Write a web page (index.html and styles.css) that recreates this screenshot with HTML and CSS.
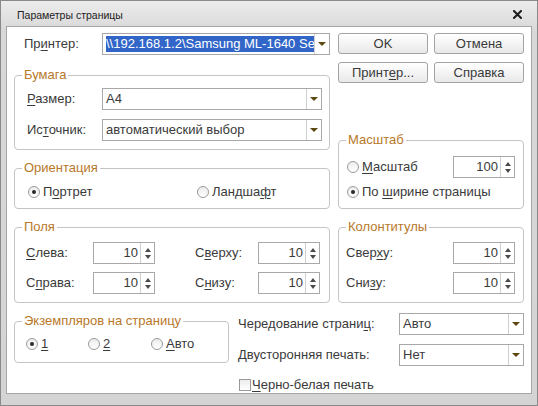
FILE: index.html
```html
<!DOCTYPE html>
<html lang="ru">
<head>
    <meta charset="UTF-8">
    <title>Параметры страницы</title>
    <link rel="stylesheet" href="styles.css">
</head>
<body>
    <div class="window">
        <div class="titlebar">
            <span class="title">Параметры страницы</span>
            <svg class="close" width="9" height="9" viewBox="0 0 9 9">
                <path d="M1 1 L8 8 M8 1 L1 8" stroke="#1c1c1c" stroke-width="2" stroke-linecap="square"/>
            </svg>
        </div>

        <div class="content">
            <div class="top">
                <div class="col-left">
                    <div class="printer-row">
                        <span class="lbl printer-lbl">Пр<u>и</u>нтер:</span>
                        <div class="combo">
                            <span class="value"><span class="sel">\\192.168.1.2\Samsung ML-1640 Series</span></span>
                            <span class="drop"></span>
                        </div>
                    </div>

                    <fieldset class="group paper">
                        <legend>Бумага</legend>
                        <div class="group-body">
                            <span class="lbl"><u>Р</u>азмер:</span>
                            <div class="combo"><span class="value">A4</span><span class="drop"></span></div>
                            <span class="lbl">Ис<u>т</u>очник:</span>
                            <div class="combo"><span class="value">автоматический выбор</span><span class="drop"></span></div>
                        </div>
                    </fieldset>

                    <fieldset class="group orientation">
                        <legend>Ориентация</legend>
                        <div class="group-body">
                            <span class="radio"><span class="rb on"></span><span>П<u>о</u>ртрет</span></span>
                            <span class="radio"><span class="rb"></span><span>Ландша<u>ф</u>т</span></span>
                        </div>
                    </fieldset>
                </div>

                <div class="col-right">
                    <div class="buttons">
                        <div class="btn">OK</div>
                        <div class="btn">Отмена</div>
                        <div class="btn">Принт<u>е</u>р...</div>
                        <div class="btn">Справка</div>
                    </div>

                    <fieldset class="group scale">
                        <legend>Масштаб</legend>
                        <div class="group-body">
                            <div class="scale-row">
                                <span class="radio"><span class="rb"></span><span><u>М</u>асштаб</span></span>
                                <div class="spin"><span class="num">100</span><span class="arrows"><i class="up"></i><i class="down"></i></span></div>
                            </div>
                            <div class="scale-row2">
                                <span class="radio"><span class="rb on"></span><span>По <u>ш</u>ирине страницы</span></span>
                            </div>
                        </div>
                    </fieldset>
                </div>
            </div>

            <div class="middle">
                <fieldset class="group margins">
                    <legend>Поля</legend>
                    <div class="group-body">
                        <span class="lbl"><u>С</u>лева:</span>
                        <div class="spin"><span class="num">10</span><span class="arrows"><i class="up"></i><i class="down"></i></span></div>
                        <span class="lbl indent">С<u>в</u>ерху:</span>
                        <div class="spin"><span class="num">10</span><span class="arrows"><i class="up"></i><i class="down"></i></span></div>
                        <span class="lbl">С<u>п</u>рава:</span>
                        <div class="spin"><span class="num">10</span><span class="arrows"><i class="up"></i><i class="down"></i></span></div>
                        <span class="lbl indent">С<u>н</u>изу:</span>
                        <div class="spin"><span class="num">10</span><span class="arrows"><i class="up"></i><i class="down"></i></span></div>
                    </div>
                </fieldset>

                <fieldset class="group headers">
                    <legend>Колонтитулы</legend>
                    <div class="group-body">
                        <span class="lbl">Свер<u>х</u>у:</span>
                        <div class="spin"><span class="num">10</span><span class="arrows"><i class="up"></i><i class="down"></i></span></div>
                        <span class="lbl">Сни<u>з</u>у:</span>
                        <div class="spin"><span class="num">10</span><span class="arrows"><i class="up"></i><i class="down"></i></span></div>
                    </div>
                </fieldset>
            </div>

            <div class="bottom">
                <fieldset class="group copies">
                    <legend>Экземпляров на страницу</legend>
                    <div class="group-body">
                        <span class="radio"><span class="rb on"></span><u>1</u></span>
                        <span class="radio"><span class="rb"></span><u>2</u></span>
                        <span class="radio"><span class="rb"></span><span><u>А</u>вто</span></span>
                    </div>
                </fieldset>

                <div class="extra">
                    <div class="extra-grid">
                        <span class="lbl">Чередование страни<u>ц</u>:</span>
                        <div class="combo"><span class="value">Авто</span><span class="drop"></span></div>
                        <span class="lbl">Двусторонняя печать:</span>
                        <div class="combo"><span class="value">Нет</span><span class="drop"></span></div>
                    </div>
                    <div class="check-row">
                        <span class="cb"></span><span><u>Ч</u>ерно-белая печать</span>
                    </div>
                </div>
            </div>
        </div>
    </div>
</body>
</html>
```

FILE: styles.css
```css
html, body {
    margin: 0;
}

body {
    width: 538px;
    height: 406px;
    overflow: hidden;
    font: 13px/16px "Liberation Sans", Arial, sans-serif;
    color: #3a3a3a;
    background: #d4d4d4;
}

u {
    text-decoration: underline;
    text-underline-offset: 2px;
}

/* окно */
.window {
    box-sizing: border-box;
    width: 538px;
    height: 406px;
    border: 1px solid #8a8a8a;
    background: linear-gradient(#ececec, #d8d8d8 30px, #d4d4d4);
    padding: 0 5px 11px;
    display: flex;
    flex-direction: column;
}

.titlebar {
    height: 25px;
    box-sizing: border-box;
    padding: 2px 10px 0 11px;
    display: flex;
    align-items: center;
    justify-content: space-between;
}

.title {
    font-size: 10.5px;
    color: #222;
}

.content {
    box-sizing: border-box;
    height: 368px;
    border: 1px solid #a6a6a6;
    background: #fff;
    padding: 6px 7px 0 7px;
}

/* раскладка */
.top,
.middle {
    display: grid;
    grid-template-columns: 316px 186px;
    column-gap: 8px;
}

.middle {
    margin-top: 10px;
}

.bottom {
    display: grid;
    grid-template-columns: 215px 286px;
    column-gap: 9px;
    align-items: start;
    margin-top: 10px;
}

.col-left {
    display: flex;
    flex-direction: column;
}

.col-right {
    display: flex;
    flex-direction: column;
    justify-content: space-between;
}

.printer-row {
    display: grid;
    grid-template-columns: 88px minmax(0, 1fr);
    align-items: center;
    height: 22px;
}

.printer-lbl {
    padding-left: 10px;
}

.buttons {
    display: grid;
    grid-template-columns: 90px 90px;
    gap: 8px 6px;
}

.btn {
    box-sizing: border-box;
    height: 21px;
    border: 1px solid #a3a3a3;
    border-radius: 3px;
    background: linear-gradient(#ffffff, #f4f4f4 50%, #e9e9e9);
    text-align: center;
    line-height: 19px;
}

/* группы */
.group {
    margin: 0;
    padding: 0;
    min-width: 0;
    border: 1px solid #c4c4c4;
    border-radius: 4px;
}

.group legend {
    margin-left: 7px;
    padding: 0 2px;
    line-height: 16px;
    color: #b8782a;
}

.paper {
    margin-top: 12px;
}

.paper .group-body {
    padding: 5px 7px 8px 12px;
    display: grid;
    grid-template-columns: 75px minmax(0, 1fr);
    row-gap: 9px;
    align-items: center;
}

.orientation {
    margin-top: 10px;
}

.orientation .group-body {
    padding: 8px 0 8px 13px;
    display: grid;
    grid-template-columns: 169px 1fr;
}

.scale .group-body {
    padding: 8px 8px 8px 8px;
}

.scale-row {
    height: 22px;
    display: flex;
    align-items: center;
    justify-content: space-between;
}

.scale-row2 {
    margin-top: 4px;
}

.margins .group-body {
    padding: 7px 9px 8px 11px;
    display: grid;
    grid-template-columns: 67px 62px 1fr 62px;
    row-gap: 8px;
    align-items: center;
}

.lbl.indent {
    padding-left: 40px;
}

.headers .group-body {
    padding: 7px 8px 8px 7px;
    display: grid;
    grid-template-columns: 1fr 62px;
    row-gap: 8px;
    align-items: center;
}

.copies .group-body {
    padding: 7px 0 10px 11px;
    display: grid;
    grid-template-columns: 62px 63px 1fr;
}

.extra-grid {
    display: grid;
    grid-template-columns: 161px 125px;
    row-gap: 9px;
    align-items: center;
}

.check-row {
    margin-top: 12px;
    height: 14px;
    display: flex;
    align-items: center;
}

/* элементы */
.combo {
    box-sizing: border-box;
    height: 22px;
    min-width: 0;
    border: 1px solid #a8a8a8;
    background: #fff;
    display: flex;
}

.combo .value {
    flex: 1;
    min-width: 0;
    overflow: hidden;
    white-space: nowrap;
    padding: 2px 0 0 3px;
    line-height: 16px;
}

.sel {
    display: inline-block;
    background: #3165c8;
    color: #fff;
}

.drop {
    flex: none;
    width: 14px;
    border-left: 1px solid #cfcfcf;
    display: flex;
    align-items: center;
    justify-content: center;
}

.drop::after {
    content: "";
    border-left: 4px solid transparent;
    border-right: 4px solid transparent;
    border-top: 4px solid #5e4812;
}

.spin {
    box-sizing: border-box;
    width: 62px;
    height: 22px;
    border: 1px solid #a8a8a8;
    background: #fff;
    display: flex;
}

.spin .num {
    flex: 1;
    text-align: right;
    padding-right: 2px;
    line-height: 20px;
}

.spin .arrows {
    flex: none;
    width: 14px;
    border-left: 1px solid #cfcfcf;
    display: flex;
    flex-direction: column;
    align-items: center;
    justify-content: space-between;
    padding: 5px 0 4px;
    box-sizing: border-box;
}

.spin .up {
    border-left: 3.5px solid transparent;
    border-right: 3.5px solid transparent;
    border-bottom: 4px solid #4a4a4a;
}

.spin .down {
    border-left: 3.5px solid transparent;
    border-right: 3.5px solid transparent;
    border-top: 4px solid #4a4a4a;
}

.radio {
    display: inline-flex;
    align-items: center;
    height: 16px;
}

.rb {
    flex: none;
    box-sizing: border-box;
    width: 12px;
    height: 12px;
    margin-right: 3px;
    border: 1px solid #9a9a9a;
    border-radius: 50%;
    background: linear-gradient(#ececec, #ffffff);
    display: flex;
    align-items: center;
    justify-content: center;
}

.rb.on::after {
    content: "";
    width: 4px;
    height: 4px;
    border-radius: 50%;
    background: #2a2a2a;
}

.cb {
    flex: none;
    box-sizing: border-box;
    width: 12px;
    height: 12px;
    margin: 0 1px 0 1px;
    border: 1px solid #9a9a9a;
    background: linear-gradient(#ececec, #ffffff);
}
```
